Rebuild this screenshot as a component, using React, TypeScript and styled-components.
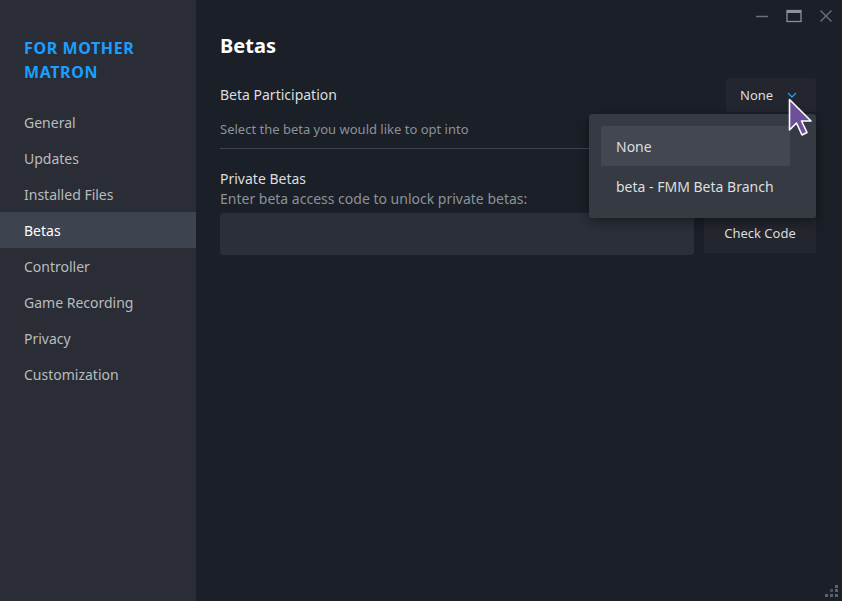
import React, { FC } from 'react'
import styled, { createGlobalStyle } from 'styled-components'

const GlobalStyle = createGlobalStyle`
  html, body, #root {
    margin: 0;
    padding: 0;
    width: 100%;
    height: 100%;
  }
  body {
    font-family: 'Noto Sans', 'Open Sans', sans-serif;
    background: #1b1f27;
    overflow: hidden;
  }
`

const NAV_ITEMS = [
  'General',
  'Updates',
  'Installed Files',
  'Betas',
  'Controller',
  'Game Recording',
  'Privacy',
  'Customization',
]

const BETA_OPTIONS = ['None', 'beta - FMM Beta Branch']

// styled components
const SWindow = styled.div`
  display: flex;
  width: 842px;
  height: 601px;
  position: relative;
  background-color: #1b1f27;
`
const SSidebar = styled.nav`
  width: 196px;
  flex-shrink: 0;
  background-color: #2a2d35;
  display: flex;
  flex-direction: column;
  padding-top: 36px;
`
const SGameTitle = styled.div`
  padding: 0 24px;
  color: #1a9fff;
  font-size: 16px;
  font-weight: 700;
  letter-spacing: 0.6px;
  line-height: 24px;
  margin-bottom: 20px;
`
const SNavItem = styled.div<{ $active?: boolean }>`
  height: 36px;
  display: flex;
  align-items: center;
  padding: 0 24px;
  font-size: 14px;
  color: ${(p) => (p.$active ? '#ffffff' : '#b8bcbf')};
  background-color: ${(p) => (p.$active ? '#3d4450' : 'transparent')};
`
const SMain = styled.main`
  flex: 1;
  display: flex;
  flex-direction: column;
  padding: 32px 26px 0 24px;
  position: relative;
`
const STitleBar = styled.div`
  position: absolute;
  top: 6px;
  right: 6px;
  display: flex;
  gap: 12px;
`
const SWinButton = styled.div`
  width: 20px;
  height: 20px;
  display: flex;
  align-items: center;
  justify-content: center;
`
const SHeading = styled.h1`
  margin: 0 0 18px;
  font-size: 20px;
  font-weight: 700;
  line-height: 28px;
  color: #ffffff;
`
const SRow = styled.div`
  display: flex;
  justify-content: space-between;
  align-items: center;
`
const SLabel = styled.div`
  font-size: 14px;
  color: #dcdedf;
  line-height: 20px;
`
const SDesc = styled.div<{ $size?: number }>`
  font-size: ${(p) => p.$size ?? 13}px;
  color: #8b929a;
  line-height: 20px;
`
const SSection = styled.div`
  display: flex;
  flex-direction: column;
  gap: 7px;
  padding-bottom: 9px;
  border-bottom: 1px solid #3d4450;
`
const SSelectWrap = styled.div`
  position: relative;
`
const SSelect = styled.div`
  width: 90px;
  height: 34px;
  box-sizing: border-box;
  background-color: #23262e;
  border-radius: 3px;
  display: flex;
  align-items: center;
  padding-left: 14px;
  gap: 14px;
  font-size: 13px;
  color: #dcdedf;
`
const SMenu = styled.div`
  position: absolute;
  top: 36px;
  right: 0;
  width: 227px;
  box-sizing: border-box;
  padding: 12px 26px 12px 12px;
  background-color: #363a43;
  border-radius: 3px;
  box-shadow: 0 4px 12px rgba(0, 0, 0, 0.4);
  z-index: 10;
`
const SMenuItem = styled.div<{ $active?: boolean }>`
  height: 40px;
  display: flex;
  align-items: center;
  padding-left: 15px;
  font-size: 14px;
  color: #dcdedf;
  border-radius: 2px;
  background-color: ${(p) => (p.$active ? '#424752' : 'transparent')};
`
const SCursor = styled.svg`
  position: absolute;
  top: 20px;
  left: 62px;
  z-index: 20;
`
const SPrivate = styled.div`
  display: flex;
  flex-direction: column;
  margin-top: 20px;
`
const SCodeRow = styled.div`
  display: flex;
  gap: 10px;
  margin-top: 4px;
`
const SInput = styled.div`
  flex: 1;
  height: 42px;
  background-color: #2b2f38;
  border-radius: 3px;
`
const SButton = styled.div`
  width: 112px;
  height: 40px;
  background-color: #23262e;
  border-radius: 2px;
  display: flex;
  align-items: center;
  justify-content: center;
  font-size: 13px;
  color: #dcdedf;
`
const SGrip = styled.svg`
  position: absolute;
  right: 4px;
  bottom: 4px;
`

const Chevron: FC = () => (
  <svg width='10' height='6' viewBox='0 0 10 6'>
    <path d='M1 1 L5 5 L9 1' fill='none' stroke='#1a9fff' strokeWidth='1.3' />
  </svg>
)

export default function App() {
  return (
    <SWindow>
      <GlobalStyle />
      <SSidebar>
        <SGameTitle>
          FOR MOTHER
          <br />
          MATRON
        </SGameTitle>
        {NAV_ITEMS.map((item) => (
          <SNavItem key={item} $active={item === 'Betas'}>
            {item}
          </SNavItem>
        ))}
      </SSidebar>
      <SMain>
        <STitleBar>
          <SWinButton>
            <svg width='14' height='14' viewBox='0 0 14 14'>
              <path d='M1 7.5 H13' stroke='#6b7079' strokeWidth='1.5' />
            </svg>
          </SWinButton>
          <SWinButton>
            <svg width='16' height='14' viewBox='0 0 16 14'>
              <rect x='1' y='1.5' width='14' height='11' fill='none' stroke='#8b9099' strokeWidth='1.3' />
              <path d='M1 3 H15' stroke='#8b9099' strokeWidth='2' />
            </svg>
          </SWinButton>
          <SWinButton>
            <svg width='14' height='14' viewBox='0 0 14 14'>
              <path d='M1.5 1.5 L12.5 12.5 M12.5 1.5 L1.5 12.5' stroke='#6b7079' strokeWidth='1.4' />
            </svg>
          </SWinButton>
        </STitleBar>
        <SHeading>Betas</SHeading>
        <SSection>
          <SRow>
            <SLabel>Beta Participation</SLabel>
            <SSelectWrap>
              <SSelect>
                None
                <Chevron />
              </SSelect>
              <SMenu>
                {BETA_OPTIONS.map((opt) => (
                  <SMenuItem key={opt} $active={opt === 'None'}>
                    {opt}
                  </SMenuItem>
                ))}
              </SMenu>
              <SCursor width='26' height='40' viewBox='0 0 26 40'>
                <path
                  d='M1.5 1.5 L1.5 32 L8.5 25 L14 37 L19 34.5 L13.5 23 L23 23 Z'
                  fill='#6d4f9a'
                  stroke='#ffffff'
                  strokeWidth='1.6'
                  strokeLinejoin='round'
                />
              </SCursor>
            </SSelectWrap>
          </SRow>
          <SDesc>Select the beta you would like to opt into</SDesc>
        </SSection>
        <SPrivate>
          <SLabel>Private Betas</SLabel>
          <SDesc $size={14}>Enter beta access code to unlock private betas:</SDesc>
          <SCodeRow>
            <SInput />
            <SButton>Check Code</SButton>
          </SCodeRow>
        </SPrivate>
        <SGrip width='14' height='14' viewBox='0 0 14 14'>
          <rect x='11' y='2' width='3' height='3' fill='#5c616b' />
          <rect x='6' y='6' width='3' height='3' fill='#4a4f58' />
          <rect x='11' y='6' width='3' height='3' fill='#5c616b' />
          <rect x='1' y='11' width='3' height='3' fill='#5c616b' />
          <rect x='6' y='11' width='3' height='3' fill='#5c616b' />
          <rect x='11' y='11' width='3' height='3' fill='#5c616b' />
        </SGrip>
      </SMain>
    </SWindow>
  )
}
